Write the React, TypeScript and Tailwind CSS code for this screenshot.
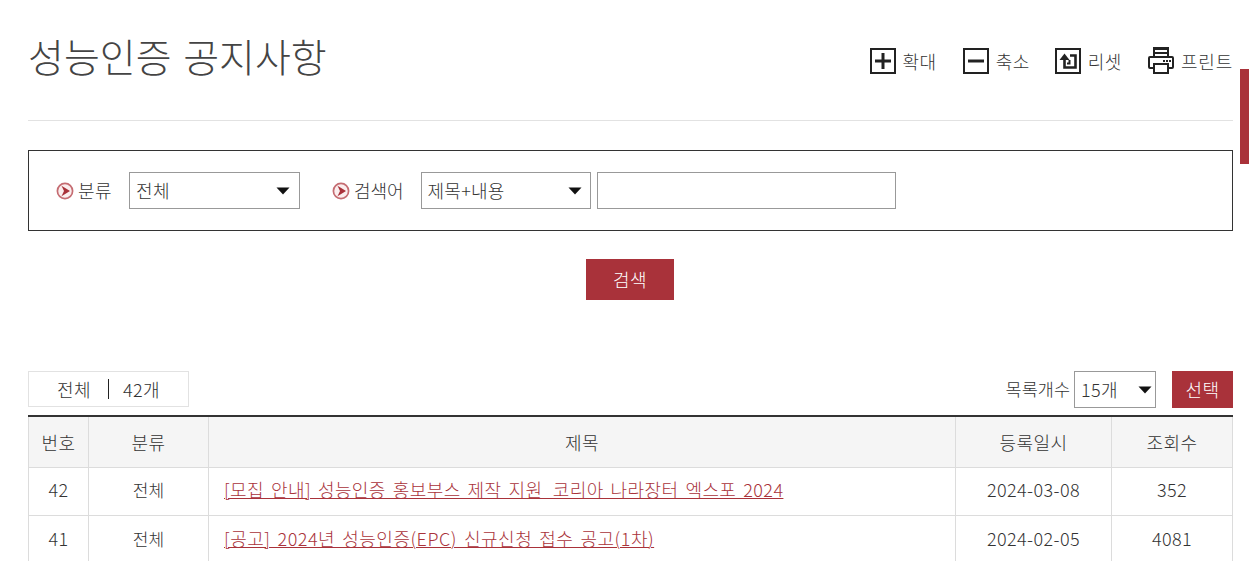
import React from "react";

const font = { fontFamily: '"Noto Sans CJK KR", "Noto Sans", sans-serif' };

function Arrow() {
  return (
    <svg width="18" height="18" viewBox="0 0 18 18" className="shrink-0">
      <circle cx="9" cy="9" r="7.6" fill="#fbeeee" stroke="#c56c72" strokeWidth="1.7" />
      <path d="M5.500 3.800 L14 9 L5.500 14.200 L8 9 Z" fill="#a9323a" />
    </svg>
  );
}

function Caret() {
  return (
    <svg width="14" height="8" viewBox="0 0 14 8" className="shrink-0">
      <path d="M0.500 0.500 H13.500 L7 7.500 Z" fill="#111" />
    </svg>
  );
}

function Select({ label, cls }: { label: string; cls: string }) {
  return (
    <div className={`flex h-[37px] items-center justify-between border border-[#999] pl-[6px] text-[#333] ${cls}`}>
      <span>{label}</span>
      <Caret />
    </div>
  );
}

function Tool({ icon, label, cls, labelCls }: { icon: React.ReactNode; label: string; cls: string; labelCls: string }) {
  return (
    <div className={`flex items-center ${cls}`}>
      {icon}
      <span className={`text-[18px] leading-6 font-light text-[#333] ${labelCls}`}>{label}</span>
    </div>
  );
}

const Box = ({ children }: { children: React.ReactNode }) => (
  <svg width="26" height="26" viewBox="0 0 26 26" className="shrink-0">
    <rect x="1" y="1" width="24" height="24" fill="#fff" stroke="#222" strokeWidth="2" />
    {children}
  </svg>
);

const rows = [
  { no: "42", title: "[모집 안내] 성능인증 홍보부스 제작 지원_코리아 나라장터 엑스포 2024", date: "2024-03-08", views: "352", link: "tracking-[0.4px] [word-spacing:2.600px]", pad: "pb-[3px]" },
  { no: "41", title: "[공고] 2024년 성능인증(EPC) 신규신청 접수 공고(1차)", date: "2024-02-05", views: "4081", link: "tracking-[0.5px] [word-spacing:2.600px]", pad: "pb-[1px]" },
];

export default function App() {
  return (
    <div style={font} className="relative h-[561px] overflow-hidden bg-white pl-[28px] pr-[16px] text-[18px] font-light tracking-[0.4px] text-[#333]">
      <div className="absolute right-0 top-[69px] h-[95px] w-[9px] bg-[#a9323a]" />

      <header className="flex h-[121px] items-start justify-between border-b border-[#e2e2e2]">
        <h1 className="mt-[27px] text-[39px] leading-[56px] font-light tracking-normal text-[#444] [word-spacing:3px]">성능인증 공지사항</h1>
        <div className="mt-[47px] flex items-center">
          <Tool cls="gap-[7px]" labelCls="tracking-[0.5px]" label="확대" icon={<Box><path d="M13 5V21M5 13H21" stroke="#222" strokeWidth="3" /></Box>} />
          <Tool cls="ml-[26px] gap-[7px]" labelCls="tracking-[0.5px]" label="축소" icon={<Box><path d="M5 13H21" stroke="#222" strokeWidth="3" /></Box>} />
          <Tool
            cls="ml-[25px] gap-[7px]"
            labelCls="tracking-[0.5px]"
            label="리셋"
            icon={
              <Box>
                <path d="M15 7.500H20.500V19.500H9.500V10" fill="none" stroke="#222" strokeWidth="2.600" />
                <path d="M4.500 12L9.500 5.500L14.500 12Z" fill="#222" />
                <path d="M14.500 12V15.500H12" fill="none" stroke="#222" strokeWidth="2" />
              </Box>
            }
          />
          <Tool
            cls="ml-[26px] gap-[7px]"
            labelCls="tracking-[0.8px]"
            label="프린트"
            icon={
              <svg width="26" height="27" viewBox="0 0 26 27" className="shrink-0">
                <rect x="5" y="0" width="16" height="10" fill="#222" />
                <rect x="7" y="3" width="12" height="2" fill="#fff" />
                <rect x="7" y="7" width="12" height="2" fill="#fff" />
                <rect x="1" y="10" width="24" height="11" rx="1" fill="#fff" stroke="#222" strokeWidth="2" />
                <path d="M15 14h2M18 14h2M21 14h2" stroke="#222" strokeWidth="2" />
                <rect x="6" y="17" width="14" height="9" fill="#fff" stroke="#222" strokeWidth="2" />
              </svg>
            }
          />
        </div>
      </header>

      <section className="mt-[29px] flex h-[81px] items-center border border-[#333] pl-[27px]">
        <div className="flex items-center gap-[4px]">
          <Arrow />
          <span>분류</span>
        </div>
        <div className="ml-[17px]"><Select label="전체" cls="w-[171px] pr-[9px]" /></div>
        <div className="ml-[32px] flex items-center gap-[4px] tracking-normal">
          <Arrow />
          <span>검색어</span>
        </div>
        <div className="ml-[17px] tracking-[0.2px]"><Select label="제목+내용" cls="w-[170px] pr-[8px]" /></div>
        <div className="ml-[6px] h-[37px] w-[299px] border border-[#999]" />
      </section>

      <div className="mt-[28px] flex justify-center pr-[1px]">
        <button className="h-[41px] w-[88px] bg-[#a9323a] text-white">검색</button>
      </div>

      <div className="mt-[71px] flex h-[37px] items-start justify-between">
        <div className="flex h-[36px] w-[161px] items-center border border-[#e2e2e2]">
          <span className="ml-[28px]">전체</span>
          <span className="ml-[17px] h-[20px] w-px bg-[#222]" />
          <span className="ml-[14px]">42개</span>
        </div>
        <div className="flex items-center">
          <span className="text-[17.500px] tracking-normal">목록개수</span>
          <div className="ml-[4px]"><Select label="15개" cls="w-[82px] pr-[3px]" /></div>
          <button className="ml-[16px] h-[37px] w-[61px] bg-[#a9323a] text-white">선택</button>
        </div>
      </div>

      <table className="mt-[7px] w-full table-fixed border-collapse border-t-2 border-[#333] text-center">
        <colgroup>
          <col className="w-[60px]" />
          <col className="w-[120px]" />
          <col />
          <col className="w-[156px]" />
          <col className="w-[121px]" />
        </colgroup>
        <thead>
          <tr className="h-[51px] bg-[#f5f5f5]">
            {["번호", "분류", "제목", "등록일시", "조회수"].map((h) => (
              <th key={h} className="border border-t-0 border-[#dcdcdc] pt-[2px] font-light">{h}</th>
            ))}
          </tr>
        </thead>
        <tbody>
          {rows.map((r) => (
            <tr key={r.no} className="h-[48px]">
              <td className={`border border-[#dcdcdc] ${r.pad}`}>{r.no}</td>
              <td className={`border border-[#dcdcdc] text-[17px] tracking-normal ${r.pad}`}>전체</td>
              <td className={`border border-[#dcdcdc] pl-[15px] text-left ${r.pad}`}>
                <a className={`text-[#a9323a] underline decoration-1 underline-offset-[1px] ${r.link}`} href="#">{r.title}</a>
              </td>
              <td className={`border border-[#dcdcdc] ${r.pad}`}>{r.date}</td>
              <td className={`border border-[#dcdcdc] ${r.pad}`}>{r.views}</td>
            </tr>
          ))}
        </tbody>
      </table>
    </div>
  );
}
